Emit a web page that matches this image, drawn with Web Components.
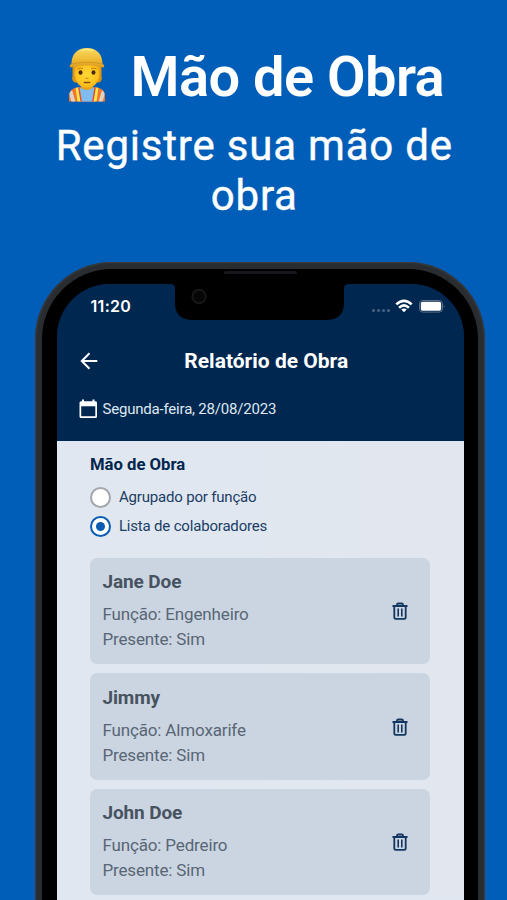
<!DOCTYPE html>
<html lang="pt-BR">
<head>
<meta charset="utf-8">
<meta name="viewport" content="width=device-width, initial-scale=1">
<title>Mão de Obra</title>
<style>
  html, body { margin: 0; height: 100%; }
  body { background: #005eb8; font-family: Roboto, sans-serif; overflow: hidden; }
</style>
</head>
<body>
<promo-page>
  <promo-heading slot="heading">
    <span slot="title">Mão de Obra</span>
    <span slot="subtitle">Registre sua mão de obra</span>
  </promo-heading>
  <phone-frame>
    <status-bar time="11:20"></status-bar>
    <report-header>
      <span slot="title">Relatório de Obra</span>
      <span slot="date">Segunda-feira, 28/08/2023</span>
    </report-header>
    <worker-section heading="Mão de Obra">
      <radio-option slot="options">Agrupado por função</radio-option>
      <radio-option slot="options" checked>Lista de colaboradores</radio-option>
      <worker-card name="Jane Doe" role-name="Engenheiro" present="Sim"></worker-card>
      <worker-card name="Jimmy" role-name="Almoxarife" present="Sim"></worker-card>
      <worker-card name="John Doe" role-name="Pedreiro" present="Sim"></worker-card>
    </worker-section>
  </phone-frame>
</promo-page>

<script>
class PromoPage extends HTMLElement {
  constructor() {
    super();
    this.attachShadow({ mode: "open" }).innerHTML = `
      <style>
        :host{ display:flex; flex-direction:column; align-items:center; height:900px; overflow:hidden; background:#005eb8; }
        .top{ width:100%; height:262px; flex:none; }
        .device{ flex:1; min-height:0; width:450px; margin-left:13px; }
      </style>
      <div class="top"><slot name="heading"></slot></div>
      <div class="device"><slot></slot></div>
    `;
  }
}
customElements.define("promo-page", PromoPage);

class WorkerEmoji extends HTMLElement {
  constructor() {
    super();
    this.attachShadow({ mode: "open" }).innerHTML = `
      <style>
        :host{ display:block; width:40px; height:56px; margin-top:-7px; }
        svg{ display:block; }
      </style>
      <svg width="40" height="56" viewBox="0 0 40 56">
        <defs>
          <linearGradient id="hat" x1="0" y1="0" x2="0" y2="1">
            <stop offset="0" stop-color="#f9dc62"/><stop offset=".6" stop-color="#efb934"/><stop offset="1" stop-color="#dc9c20"/>
          </linearGradient>
          <radialGradient id="skin" cx=".5" cy=".45" r=".6">
            <stop offset="0" stop-color="#ffd836"/><stop offset=".7" stop-color="#fdc31e"/><stop offset="1" stop-color="#eba314"/>
          </radialGradient>
          <clipPath id="body"><path d="M2 55.500v-4.500c0-6 3-9 9-9.500h18c6 .5 9 3.500 9 9.500v4.500z"/></clipPath>
        </defs>
        <!-- hair -->
        <path d="M5.500 20h29v10c1 3 0 5.500-2.500 6.500h-4V26H12v10.500H8C5.500 35.500 4.500 33 5.500 30z" fill="#dc9414"/>
        <!-- vest and shirt -->
        <g clip-path="url(#body)">
          <path d="M0 40h40v16H0z" fill="#f4772a"/>
          <path d="M11 40h18l-2.500 16h-13z" fill="#7ebcf2"/>
          <path d="M2 47l3-3 3.500 12h-4zM38 47l-3-3-3.500 12h4z" fill="#ddd3c4"/>
          <path d="M8.500 41h3l2.500 15H10.500zM31.500 41h-3L26 56h3.500z" fill="#fbe64e"/>
          <path d="M11 41h1.500l2.500 15h-1.500zM29 41h-1.500L25 56h1.500z" fill="#e94f28"/>
        </g>
        <path d="M14 37h12v5q-6 4-12 0z" fill="#e8a018"/>
        <!-- head -->
        <path d="M7.500 18h25v9.500c0 8.500-5.500 14.500-12.500 14.500S7.500 36 7.500 27.500z" fill="url(#skin)"/>
        <ellipse cx="13.500" cy="26.500" rx="2" ry="2.300" fill="#4a2913"/>
        <ellipse cx="26.500" cy="26.500" rx="2" ry="2.300" fill="#4a2913"/>
        <path d="M10.500 23q3-1.600 5.500-.4M24 22.600q3-1.200 5.500.4" stroke="#bd7b12" stroke-width="1" fill="none"/>
        <path d="M18.500 32q1.500 1 3 0" stroke="#cf820d" fill="none"/>
        <path d="M17.300 36.500h5.400" stroke="#8d4710" stroke-width="1.500" stroke-linecap="round" fill="none"/>
        <!-- helmet -->
        <path d="M4.500 18C4.500 8 10.500 2 20 2s15.500 6 15.500 16c2 .8 2.300 3 .8 3.500-8-2.800-24.600-2.800-32.600 0-1.500-.5-1.200-2.700.8-3.500z" fill="url(#hat)"/>
        <path d="M4.500 18q15.500-3.500 31 0" stroke="#cf951f" stroke-width=".9" fill="none"/>
        <path d="M14 4.800q6-2.600 12 0" stroke="#ffef94" stroke-width="1.300" fill="none" opacity=".7"/>
      </svg>
    `;
  }
}
customElements.define("worker-emoji", WorkerEmoji);

class PromoHeading extends HTMLElement {
  constructor() {
    super();
    this.attachShadow({ mode: "open" }).innerHTML = `
      <style>
        :host{ display:block; color:#fff; text-align:center; padding-top:42px; }
        h1{ display:flex; align-items:center; gap:23.500px; margin:0 0 0 67px; height:70px; font-size:56px; font-weight:600; line-height:70px; white-space:nowrap; letter-spacing:-.55px; }
        p{ margin:9px auto 0; width:420px; padding-left:1.500px; font-size:42px; line-height:50px; letter-spacing:.8px; -webkit-text-stroke:.4px #fff; }
      </style>
      <h1><worker-emoji></worker-emoji><slot name="title"></slot></h1>
      <p><slot name="subtitle"></slot></p>
    `;
  }
}
customElements.define("promo-heading", PromoHeading);

class PhoneFrame extends HTMLElement {
  constructor() {
    super();
    this.attachShadow({ mode: "open" }).innerHTML = `
      <style>
        :host{
          display:block; box-sizing:border-box; width:450px; height:920px; position:relative;
          padding:7px; border-radius:77px; background:#2a2d30; box-shadow: inset 0 0 2px 1px #3c3f42;
        }
        .bezel{ box-sizing:border-box; height:100%; padding:15px 14px 15px 14.500px; border-radius:70px; background:#000; }
        .screen{ height:100%; border-radius:53px; overflow:hidden; background:linear-gradient(#002750 120px,#e1e7f0 120px); }
        .notch{ position:absolute; left:132px; top:20px; }
      </style>
      <div class="bezel"><div class="screen"><slot></slot></div></div>
      <svg class="notch" width="186" height="40" viewBox="0 0 186 40">
        <path d="M4 0h178v2q-5 0-5 5v14q0 17-18 17H26Q8 38 8 21V7q0-5-4-5z" fill="#000"/>
        <circle cx="32" cy="14.500" r="6.700" fill="#060606" stroke="#171719" stroke-width="2"/>
      </svg>
      <svg class="notch" style="left:189px;top:9px" width="73" height="4"><rect width="73" height="3" rx="1.500" fill="#15171a"/></svg>
    `;
  }
}
customElements.define("phone-frame", PhoneFrame);

class StatusBar extends HTMLElement {
  constructor() {
    super();
    this.attachShadow({ mode: "open" }).innerHTML = `
      <style>
        :host{ display:flex; justify-content:space-between; align-items:center; box-sizing:border-box; height:44px; padding:0 20px 0 34px; background:#002750; color:#fff; }
        .time{ font:600 16px/20px Inter, sans-serif; letter-spacing:.3px; }
        svg{ display:block; overflow:visible; }
      </style>
      <span class="time">${this.getAttribute("time")}</span>
      <svg width="75" height="20" viewBox="0 0 75 20">
        <g fill="#45617f"><circle cx="4.500" cy="14.500" r="1.600"/><circle cx="9.500" cy="14.500" r="1.600"/><circle cx="14.500" cy="14.500" r="1.600"/><circle cx="19.500" cy="14.500" r="1.600"/></g>
        <g fill="none" stroke="#fff" stroke-width="2.600"><path d="M27.300 8.400q7.700-7 15.400 0M30.100 11.700q4.900-4.500 9.800 0"/></g>
        <path d="M35 16.300l-2.700-2.900q2.700-2 5.400 0z" fill="#fff"/>
        <rect x="50.500" y="4.500" width="23" height="11.600" rx="3.300" fill="none" stroke="#5b718b" stroke-width="1"/>
        <rect x="51.800" y="5.800" width="20.400" height="9" rx="1.800" fill="#fff"/>
        <path d="M74.800 8.500v3.600q1.500-1.800 0-3.600z" fill="#6f839b"/>
      </svg>
    `;
  }
}
customElements.define("status-bar", StatusBar);

class ReportHeader extends HTMLElement {
  constructor() {
    super();
    this.attachShadow({ mode: "open" }).innerHTML = `
      <style>
        :host{ display:block; box-sizing:border-box; height:113px; padding-top:15px; background:#002750; color:#fff; }
        .bar{ display:grid; grid-template-columns:66px 1fr 54px; align-items:center; height:32px; }
        .back{ margin-left:23.500px; }
        h2{ margin:0; font-size:21px; font-weight:700; line-height:36px; text-align:center; white-space:nowrap; }
        .date{ display:flex; align-items:center; gap:5px; margin:23px 0 0 21px; height:22px; font-size:15px; line-height:23px; letter-spacing:-.2px; color:#dfe7f0; }
        svg{ display:block; }
      </style>
      <div class="bar">
        <svg class="back" width="18" height="18" viewBox="0 0 18 18" fill="none" stroke="#fff" stroke-width="2"><path d="M17.300 9H2M9.500 1.300L1.800 9l7.700 7.700"/></svg>
        <h2><slot name="title"></slot></h2>
      </div>
      <div class="date">
        <svg width="20" height="20" viewBox="0 0 20 20"><path d="M5 .5v3M15.500 .5v3" stroke="#fff" stroke-width="2"/><path d="M3 2.200h14.500q1.500 0 1.500 1.500v13.800q0 1.500-1.500 1.500H3q-1.500 0-1.500-1.500V3.700Q1.500 2.200 3 2.200zM3.200 7.200v10.100h14.100V7.200z" fill="#fff" fill-rule="evenodd"/></svg>
        <slot name="date"></slot>
      </div>
    `;
  }
}
customElements.define("report-header", ReportHeader);

class WorkerSection extends HTMLElement {
  constructor() {
    super();
    this.attachShadow({ mode: "open" }).innerHTML = `
      <style>
        :host{ display:block; padding:14px 34px 0 33.400px; background:linear-gradient(90deg,#e0e7f0,#e2e7ef); color:#00264d; }
        h3{ margin:0; font-size:16.700px; line-height:20px; font-weight:700; }
        .options{ display:flex; flex-direction:column; gap:7px; margin-top:11px; }
        .cards{ display:flex; flex-direction:column; gap:9px; margin-top:20.800px; }
      </style>
      <h3>${this.getAttribute("heading")}</h3>
      <div class="options"><slot name="options"></slot></div>
      <div class="cards"><slot></slot></div>
    `;
  }
}
customElements.define("worker-section", WorkerSection);

class RadioOption extends HTMLElement {
  constructor() {
    super();
    this.attachShadow({ mode: "open" }).innerHTML = `
      <style>
        :host{ display:flex; align-items:center; gap:8px; height:22px; font-size:15px; line-height:22px; letter-spacing:-.18px; color:#1b3d66; }
        .dot{ box-sizing:border-box; width:21px; height:21px; border:2px solid #a3a6aa; border-radius:50%; background:#fff; display:grid; place-items:center; }
        :host([checked]) .dot{ border-color:#0a5cb2; border-width:2.500px; }
        :host([checked]) .dot::after{ content:""; width:9px; height:9px; border-radius:50%; background:#0a5cb2; }
      </style>
      <span class="dot"></span><span><slot></slot></span>
    `;
  }
}
customElements.define("radio-option", RadioOption);

class WorkerCard extends HTMLElement {
  constructor() {
    super();
    this.attachShadow({ mode: "open" }).innerHTML = `
      <style>
        :host{ display:flex; align-items:center; justify-content:space-between; box-sizing:border-box; height:106.500px; padding:0 22px 0 12.500px; border-radius:7px; background:#cbd5e1; color:#586675; }
        h4{ margin:0 0 8px; font-size:19px; line-height:24px; font-weight:700; letter-spacing:-.1px; color:#475360; }
        p{ margin:0; font-size:17px; line-height:25px; letter-spacing:-.15px; }
        svg{ display:block; }
      </style>
      <div>
        <h4>${this.getAttribute("name")}</h4>
        <p>Função: ${this.getAttribute("role-name")}</p>
        <p>Presente: ${this.getAttribute("present")}</p>
      </div>
      <svg width="16" height="18" viewBox="0 0 16 18" fill="none" stroke="#12365f" stroke-width="1.800">
        <path d="M.5 4h15M5 3.800V2.700Q5 1.500 6.200 1.500h3.600Q11 1.500 11 2.700v1.100M2.300 4v11.300q0 1.600 1.600 1.600h8.200q1.600 0 1.600-1.600V4"/>
        <path d="M6.200 6.500v8M9.800 6.500v8" stroke-width="1.600"/>
      </svg>
    `;
  }
}
customElements.define("worker-card", WorkerCard);
</script>
</body>
</html>
